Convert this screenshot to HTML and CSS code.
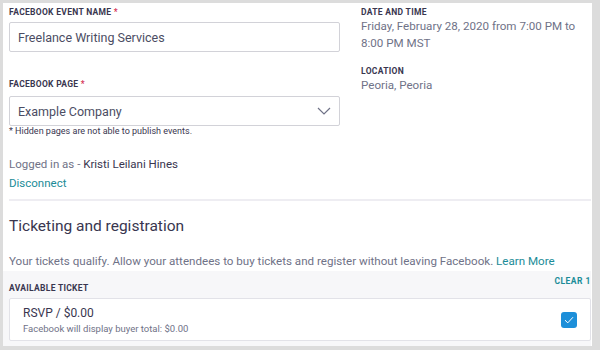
FILE: index.html
```html
<!DOCTYPE html>
<html lang="en">
<head>
    <meta charset="UTF-8">
    <title>Facebook Event</title>
    <link rel="stylesheet" href="styles.css">
</head>
<body>
    <div class="page">
        <div class="event-top">
            <div class="event-form">
                <label class="field-label">Facebook Event Name <span class="req">*</span></label>
                <div class="text-box">Freelance Writing Services</div>

                <label class="field-label page-label">Facebook Page <span class="req">*</span></label>
                <div class="text-box select-box">
                    <span>Example Company</span>
                    <svg class="chevron" width="14" height="8" viewBox="0 0 14 8"><path d="M1 1 L7 7 L13 1" fill="none" stroke="#6f7287" stroke-width="1.2"/></svg>
                </div>
                <p class="hint">* Hidden pages are not able to publish events.</p>

                <p class="logged">Logged in as - <span class="user">Kristi Leilani Hines</span></p>
                <a class="link" href="#">Disconnect</a>
            </div>

            <div class="event-details">
                <div class="field-label">Date and Time</div>
                <p class="detail">Friday, February 28, 2020 from 7:00 PM to 8:00 PM MST</p>
                <div class="field-label location-label">Location</div>
                <p class="detail">Peoria, Peoria</p>
            </div>
        </div>

        <hr class="divider">

        <h2 class="section-title">Ticketing and registration</h2>
        <p class="intro">Your tickets qualify. Allow your attendees to buy tickets and register without leaving Facebook. <a class="link" href="#">Learn More</a></p>

        <div class="tickets">
            <div class="tickets-head">
                <span class="field-label">Available Ticket</span>
                <a class="clear" href="#">Clear 1</a>
            </div>
            <div class="ticket-card">
                <div>
                    <div class="ticket-name">RSVP / $0.00</div>
                    <div class="ticket-note">Facebook will display buyer total: $0.00</div>
                </div>
                <span class="checkbox">
                    <svg width="10" height="8" viewBox="0 0 10 8"><path d="M1 4.2 L3.8 6.8 L9 1.2" fill="none" stroke="#fff" stroke-width="1"/></svg>
                </span>
            </div>
        </div>
    </div>
</body>
</html>
```

FILE: styles.css
```css
html, body {
    margin: 0;
    height: 100%;
}

body {
    background: #dcdcdc;
    padding: 3px 8px 4px 3px;
    box-sizing: border-box;
    font-family: 'Roboto', 'Liberation Sans', sans-serif;
    color: #6f7287;
}

.page {
    background: #fff;
    height: 100%;
    padding: 0 1px 0 6px;
    box-sizing: border-box;
    overflow: hidden;
}

.event-top {
    display: flex;
    gap: 21px;
}

.event-form {
    width: 331px;
}

.event-details {
    flex: 1;
}

.field-label {
    display: block;
    font-size: 8.5px;
    font-weight: bold;
    text-transform: uppercase;
    letter-spacing: 0.3px;
    color: #39364f;
    line-height: 12px;
    margin-top: 3px;
}

.req {
    color: #d6385a;
}

.text-box {
    margin-top: 4px;
    height: 30px;
    border: 1px solid #d2d2d8;
    border-radius: 2px;
    box-sizing: border-box;
    padding: 0 8px;
    display: flex;
    align-items: center;
    justify-content: space-between;
    font-size: 12.5px;
    color: #4b4d63;
}

.page-label {
    margin-top: 26px;
}

.select-box {
    margin-top: 6px;
}

.hint {
    margin: 0;
    font-size: 9px;
    line-height: 11px;
    color: #39364f;
}

.logged {
    margin: 19px 0 0;
    font-size: 11.5px;
    line-height: 16px;
}

.user {
    color: #39364f;
}

.link {
    color: #1b8c98;
    text-decoration: none;
}

.event-form > .link {
    display: block;
    margin-top: 3px;
    font-size: 11.5px;
    line-height: 16px;
}

.detail {
    margin: 0;
    font-size: 11.6px;
    line-height: 17px;
}

.location-label {
    margin-top: 13px;
}

.divider {
    margin: 8px 0 0;
    border: none;
    border-top: 2px solid #eeedf2;
}

.section-title {
    margin: 14px 0 0;
    font-size: 15.5px;
    font-weight: normal;
    color: #39364f;
    line-height: 22px;
}

.intro {
    margin: 16px 0 0;
    font-size: 11.6px;
    line-height: 16px;
}

.tickets {
    margin: 2px 0 0 -6px;
    padding: 4px 0 6px 6px;
    background: #f7f7f9;
}

.tickets-head {
    display: flex;
    justify-content: space-between;
    align-items: flex-start;
    height: 23px;
}

.tickets-head .field-label {
    margin-top: 7px;
}

.clear {
    font-size: 8.5px;
    font-weight: bold;
    letter-spacing: 0.5px;
    text-transform: uppercase;
    color: #1b8c98;
    text-decoration: none;
    line-height: 12px;
}

.ticket-card {
    background: #fff;
    border: 1px solid #e2e2e8;
    border-radius: 2px;
    height: 43px;
    box-sizing: border-box;
    padding: 0 13px 0 13px;
    display: flex;
    align-items: center;
    justify-content: space-between;
}

.ticket-name {
    font-size: 12px;
    color: #39364f;
    line-height: 16px;
}

.ticket-note {
    font-size: 9.5px;
    line-height: 12px;
    color: #6f7287;
    margin-top: 2px;
}

.checkbox {
    width: 16px;
    height: 16px;
    border-radius: 3px;
    background: #1d8fd9;
    display: flex;
    align-items: center;
    justify-content: center;
}
```
